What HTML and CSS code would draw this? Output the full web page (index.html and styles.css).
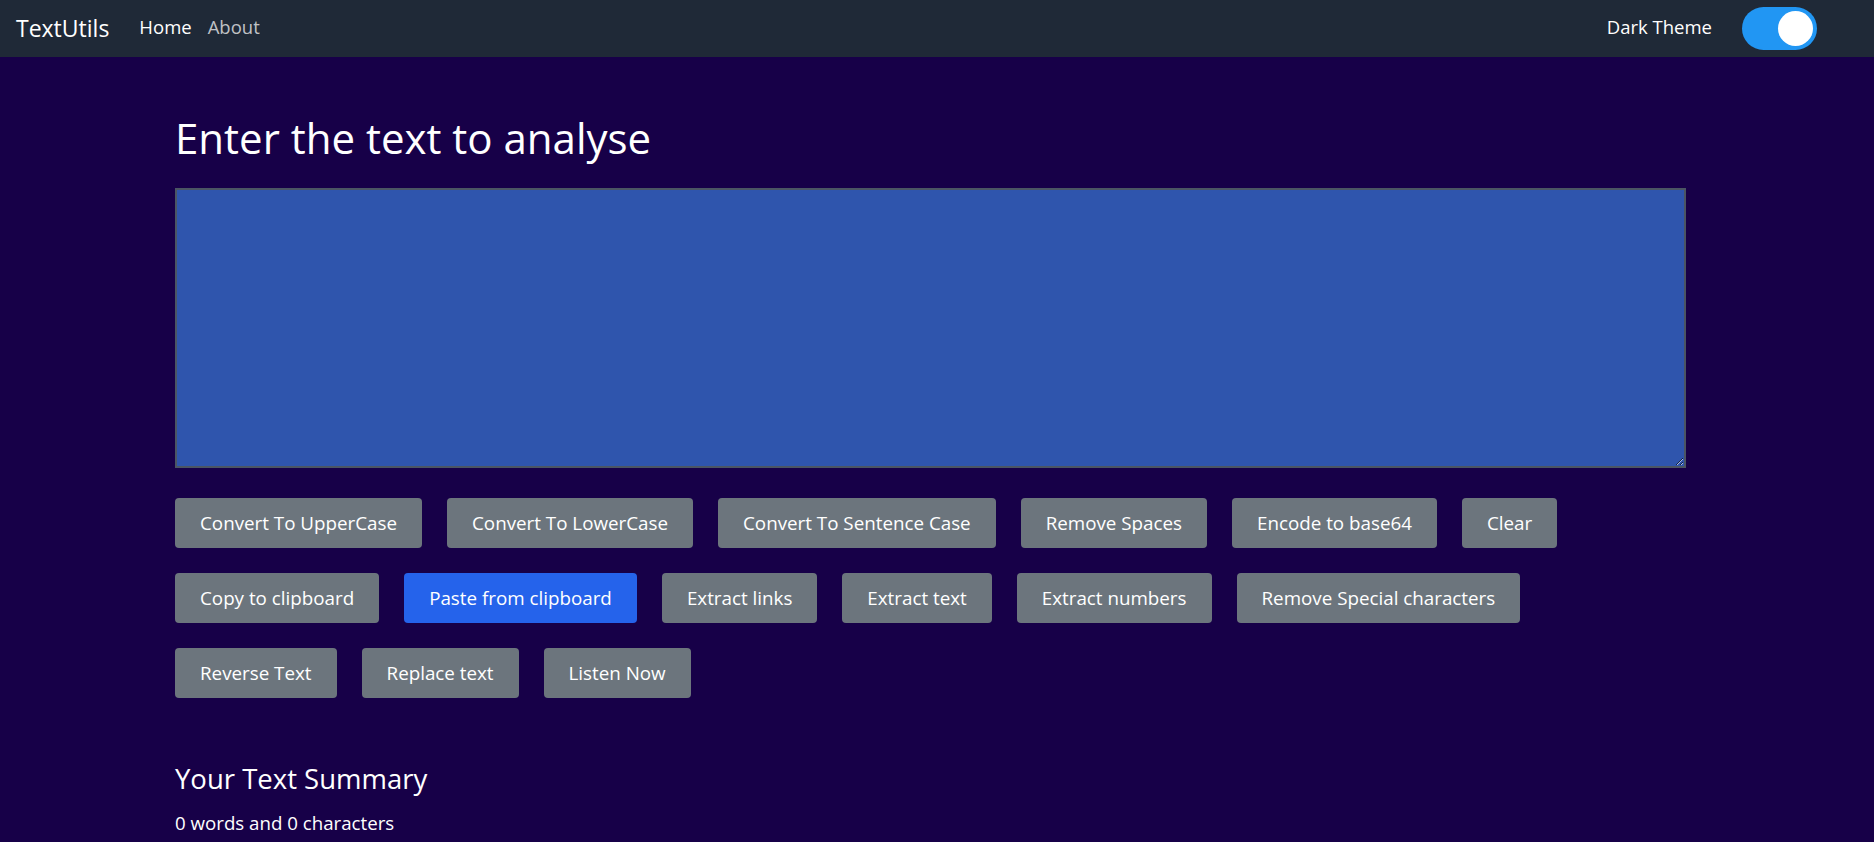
FILE: index.html
```html
<!DOCTYPE html>
<html lang="en">
<head>
<meta charset="utf-8">
<title>TextUtils</title>
<link rel="stylesheet" href="styles.css">
</head>
<body>
<nav class="navbar">
  <a class="brand" href="#">TextUtils</a>
  <ul class="nav-links">
    <li><a class="nav-link active" href="#">Home</a></li>
    <li><a class="nav-link" href="#">About</a></li>
  </ul>
  <div class="theme">
    <span class="theme-label">Dark Theme</span>
    <span class="switch"><span class="knob"></span></span>
  </div>
</nav>
<main class="container">
  <h1 class="title">Enter the text to analyse</h1>
  <textarea class="textbox"></textarea>
  <div class="btn-row">
    <button class="btn">Convert To UpperCase</button>
    <button class="btn">Convert To LowerCase</button>
    <button class="btn">Convert To Sentence Case</button>
    <button class="btn">Remove Spaces</button>
    <button class="btn">Encode to base64</button>
    <button class="btn">Clear</button>
  </div>
  <div class="btn-row">
    <button class="btn">Copy to clipboard</button>
    <button class="btn btn-primary">Paste from clipboard</button>
    <button class="btn">Extract links</button>
    <button class="btn">Extract text</button>
    <button class="btn">Extract numbers</button>
    <button class="btn">Remove Special characters</button>
  </div>
  <div class="btn-row">
    <button class="btn">Reverse Text</button>
    <button class="btn">Replace text</button>
    <button class="btn">Listen Now</button>
  </div>
  <h2 class="summary-title">Your Text Summary</h2>
  <p class="summary">0 words and 0 characters</p>
</main>
</body>
</html>
```
FILE: styles.css
```css
* { box-sizing: border-box; }
html, body { margin: 0; padding: 0; }
body {
  background: #170048;
  color: #ffffff;
  font-family: "Open Sans", "Noto Sans", sans-serif;
  font-stretch: 92%;
  overflow: hidden;
}
.navbar {
  height: 57px;
  background: #1f2937;
  display: flex;
  align-items: center;
  padding: 0 57px 5px 16px;
}
.brand {
  color: #fff;
  text-decoration: none;
  font-size: 23px;
  margin-right: 30px;
  margin-top: 3px;
}
.nav-links {
  list-style: none;
  display: flex;
  gap: 16px;
  margin: 0;
  padding: 0;
  flex: 1;
}
.nav-link {
  color: rgba(255,255,255,0.72);
  text-decoration: none;
  font-size: 18.5px;
}
.nav-link.active { color: #fff; }
.theme {
  display: flex;
  align-items: center;
  gap: 30px;
}
.theme-label { font-size: 18.5px; }
.switch {
  width: 75px;
  height: 43px;
  border-radius: 22px;
  background: #2196f3;
  display: flex;
  align-items: center;
  justify-content: flex-end;
  padding: 0 4px;
  margin-top: 5px;
}
.knob {
  width: 35px;
  height: 35px;
  border-radius: 50%;
  background: #fff;
}
.container {
  width: 1511px;
  margin-left: 175px;
}
.title {
  font-size: 42px;
  font-weight: 400;
  line-height: 1.2;
  margin: 56px 0 24.5px;
}
.textbox {
  display: block;
  width: 1511px;
  height: 280px;
  background: #2f55ad;
  border: 2px solid #4b5563;
  color: #fff;
  margin: 0 0 30px;
  font: inherit;
}
.btn-row {
  display: flex;
  gap: 25px;
  margin-bottom: 25px;
}
.btn-row:last-of-type { margin-bottom: 0; }
.btn {
  height: 50px;
  padding: 0 25px;
  border: none;
  border-radius: 4px;
  background: #6c757d;
  color: #fff;
  font-family: "Open Sans", sans-serif;
  font-stretch: 92%;
  font-size: 18.8px;
}
.btn-primary { background: #2563eb; }
.summary-title {
  font-size: 27.5px;
  font-weight: 400;
  line-height: 1.2;
  margin: 64px 0 14px;
}
.summary {
  font-size: 18.7px;
  line-height: 1.5;
  margin: 0;
}
```
